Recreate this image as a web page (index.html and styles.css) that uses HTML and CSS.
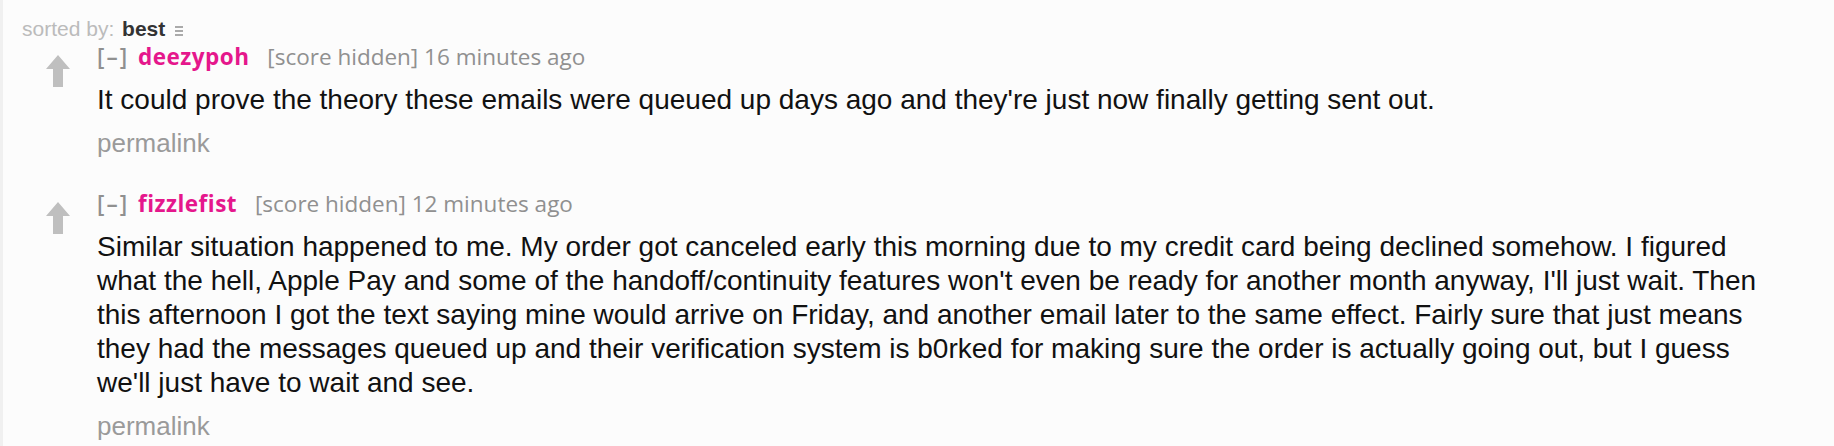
FILE: index.html
```html
<!DOCTYPE html>
<html lang="en">
<head>
  <meta charset="UTF-8">
  <title>comments</title>
  <link rel="stylesheet" href="styles.css">
</head>
<body>

<div class="commentarea">
  <div class="menuarea">
    <span class="label">sorted by:</span>
    <span class="selected">best</span>
    <svg class="dropicon" width="8" height="10" viewBox="0 0 8 10"><rect y="0" width="8" height="2"/><rect y="4" width="8" height="2"/><rect y="8" width="8" height="2"/></svg>
  </div>

  <div class="comment">
    <div class="midcol">
      <svg class="arrow" width="24" height="32" viewBox="0 0 24 32"><polygon points="12,0 24,14 17,14 17,32 7,32 7,14 0,14"/></svg>
    </div>
    <div class="entry">
      <p class="tagline">
        <span class="expand">[&ndash;]</span>
        <a class="author" href="#">deezypoh</a>
        <span class="score">[score hidden] 16 minutes ago</span>
      </p>
      <div class="md">It could prove the theory these emails were queued up days ago and they're just now finally getting sent out.</div>
      <ul class="buttons"><li><a href="#">permalink</a></li></ul>
    </div>
  </div>

  <div class="comment">
    <div class="midcol">
      <svg class="arrow" width="24" height="32" viewBox="0 0 24 32"><polygon points="12,0 24,14 17,14 17,32 7,32 7,14 0,14"/></svg>
    </div>
    <div class="entry">
      <p class="tagline">
        <span class="expand">[&ndash;]</span>
        <a class="author" href="#">fizzlefist</a>
        <span class="score">[score hidden] 12 minutes ago</span>
      </p>
      <div class="md">Similar situation happened to me. My order got canceled early this morning due to my credit card being declined somehow. I figured what the hell, Apple Pay and some of the handoff/continuity features won't even be ready for another month anyway, I'll just wait. Then this afternoon I got the text saying mine would arrive on Friday, and another email later to the same effect. Fairly sure that just means they had the messages queued up and their verification system is b0rked for making sure the order is actually going out, but I guess we'll just have to wait and see.</div>
      <ul class="buttons"><li><a href="#">permalink</a></li></ul>
    </div>
  </div>
</div>

</body>
</html>
```

FILE: styles.css
```css
body {
  margin: 0;
  background: #fcfcfc;
  font-family: "Liberation Sans", Arial, sans-serif;
  color: #222;
}

.commentarea {
  border-left: 3px solid #f0f0f0;
  min-height: 446px;
  box-sizing: border-box;
}

.menuarea {
  padding: 16px 0 0 19px;
  font-size: 21px;
  line-height: 26px;
  height: 42px;
  box-sizing: border-box;
}

.menuarea .label {
  color: #bbb;
}

.menuarea .selected {
  color: #333;
  font-weight: bold;
  margin-left: 2px;
}

.dropicon {
  fill: #aaa;
  margin-left: 4px;
}

.comment {
  display: flex;
  padding: 0 60px 0 43px;
  margin-bottom: 31px;
}

.midcol {
  width: 24px;
  flex-shrink: 0;
  padding-top: 13px;
}

.arrow {
  display: block;
  fill: #bfbfbf;
}

.entry {
  flex: 1;
  margin-left: 27px;
}

.tagline {
  margin: 0;
  font-family: "Open Sans", sans-serif;
  font-size: 22.5px;
  line-height: 30px;
  color: #909090;
}

.expand {
  color: #909090;
  font-weight: 600;
  letter-spacing: 2px;
  margin-right: 3px;
}

.author {
  color: #e5178c;
  font-weight: bold;
  letter-spacing: 0.5px;
  text-decoration: none;
  margin-right: 12px;
}

.md {
  margin-top: 11px;
  font-size: 28px;
  line-height: 34px;
  color: #111;
}

.buttons {
  list-style: none;
  margin: 11px 0 0;
  padding: 0;
  font-size: 26px;
  line-height: 30px;
}

.buttons a {
  color: #9a9a9a;
  text-decoration: none;
}
```
